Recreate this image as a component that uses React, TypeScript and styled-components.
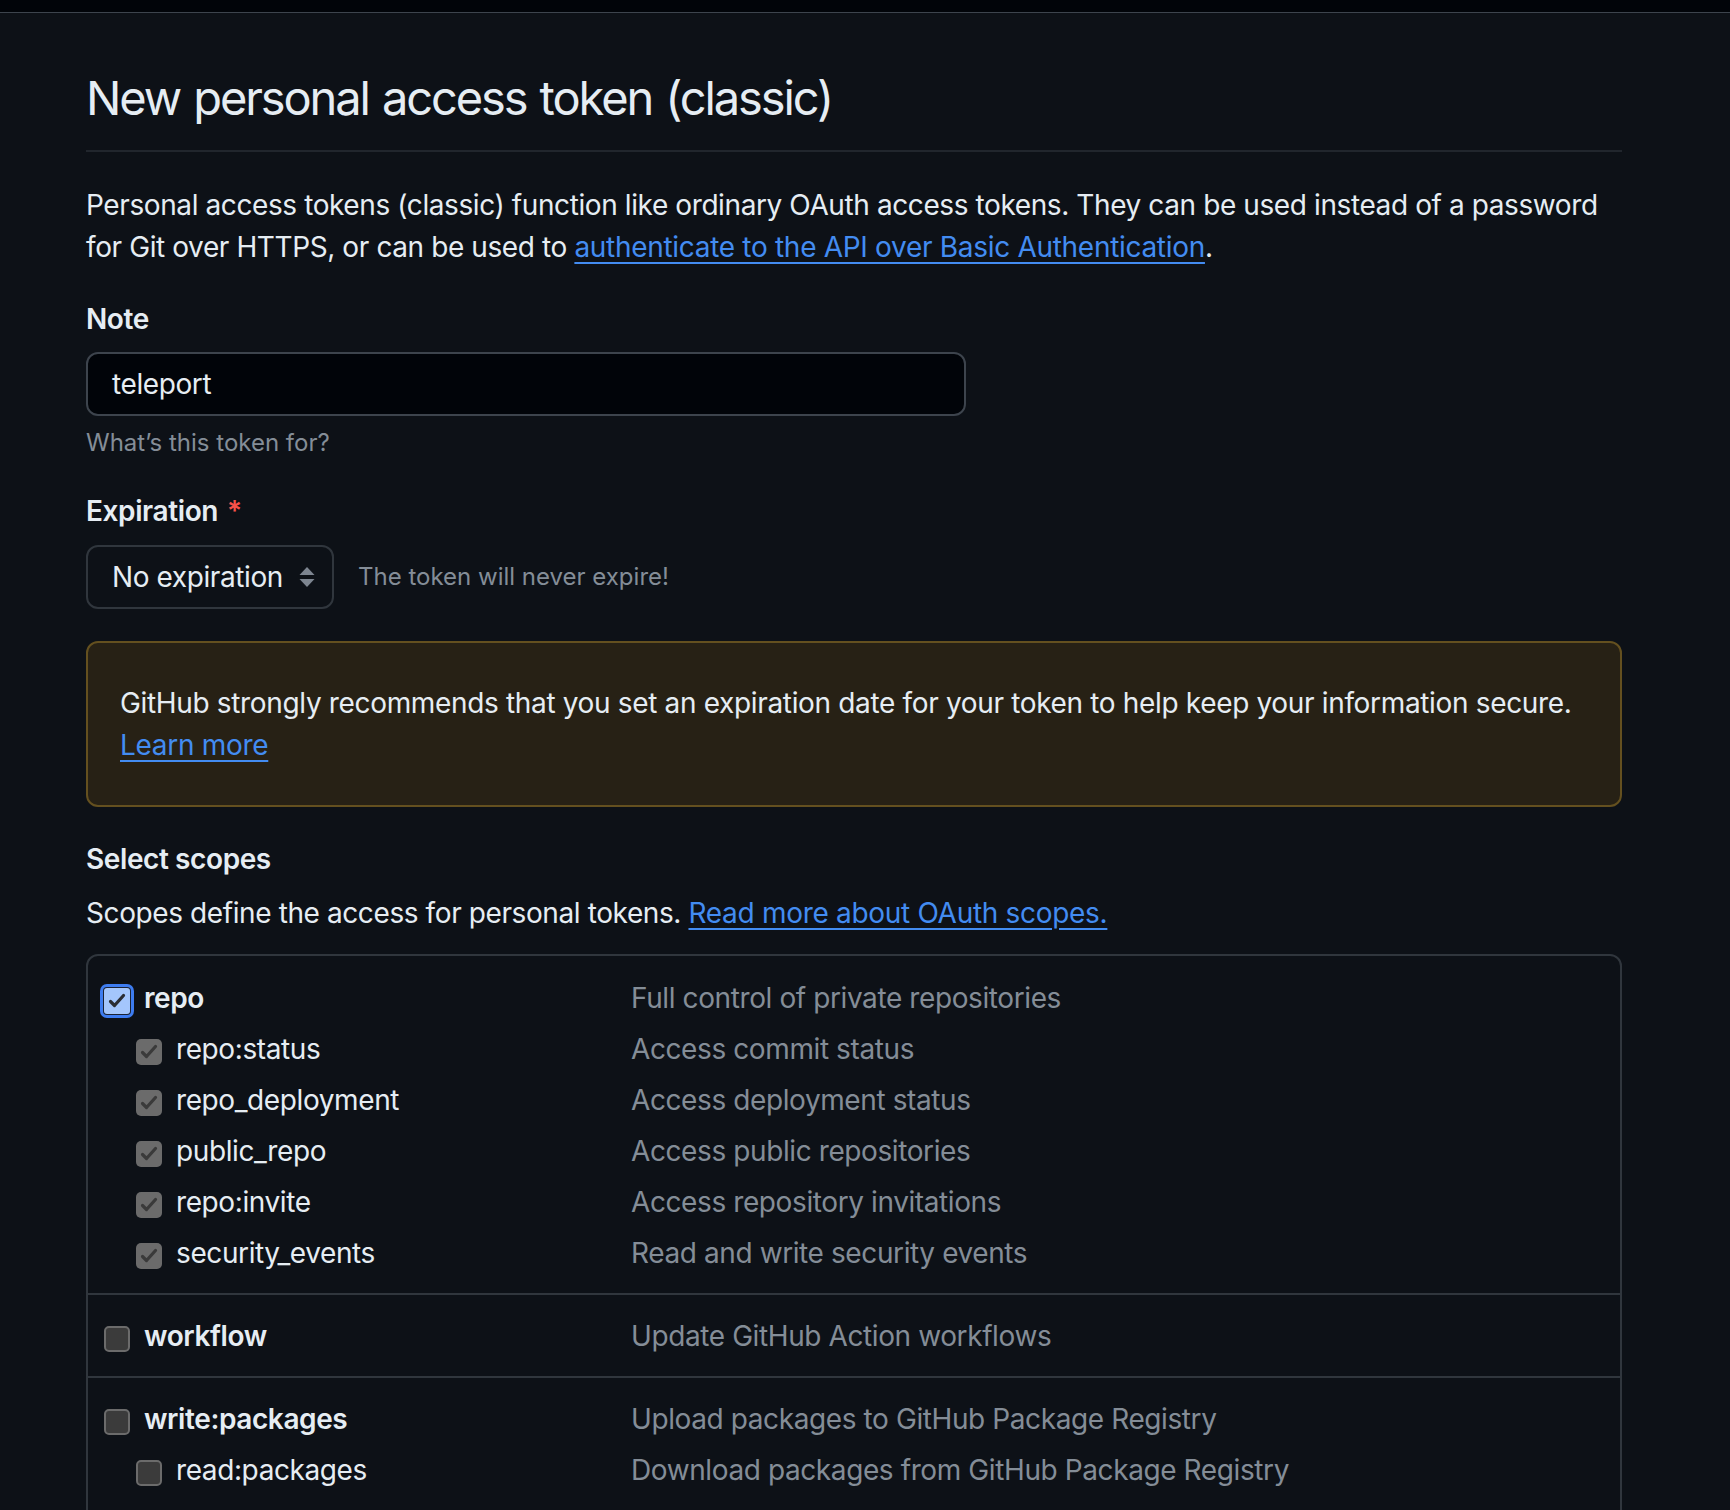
import styled, { createGlobalStyle } from 'styled-components';

const GlobalStyle = createGlobalStyle`
  body {
    margin: 0;
    background: #0d1117;
    color: #e6edf3;
    font-family: Inter, "Noto Sans", "Liberation Sans", sans-serif;
    font-size: 28px;
    letter-spacing: -0.4px;
  }
`;

const TopBar = styled.div`
  height: 12px;
  background: #010409;
  border-bottom: 1px solid #3d444d;
`;

const Page = styled.main`
  width: 1536px;
  padding: 0 0 40px 86px;
`;

const Subhead = styled.div`
  padding: 49px 0 16px;
  border-bottom: 2px solid #21262d;
`;

const Heading = styled.h2`
  margin: 0;
  font-size: 47px;
  font-weight: 400;
  line-height: 72px;
  letter-spacing: -2.1px;
  word-spacing: 2px;
`;

const Text = styled.p<{ $top?: number }>`
  margin: ${(p) => p.$top ?? 0}px 0 0;
  font-size: 28px;
  line-height: 42px;
`;

const Link = styled.a`
  color: #438cf1;
  text-decoration: underline;
  text-underline-offset: 5px;
  text-decoration-thickness: 2px;
  letter-spacing: -0.3px;
`;

const Label = styled.div<{ $top: number }>`
  margin-top: ${(p) => p.$top}px;
  font-size: 28px;
  line-height: 42px;
  font-weight: 600;
`;

const Required = styled.span`
  color: #f85149;
  margin-left: 9px;
`;

const Input = styled.div`
  margin-top: 12px;
  box-sizing: border-box;
  width: 880px;
  height: 64px;
  padding: 0 24px;
  display: flex;
  align-items: center;
  background: #010409;
  border: 2px solid #3d444d;
  border-radius: 12px;
  font-size: 28px;
`;

const Hint = styled.div<{ $top?: number }>`
  margin-top: ${(p) => p.$top ?? 0}px;
  font-size: 24px;
  line-height: 36px;
  color: #848d97;
  letter-spacing: 0;
`;

const SelectRow = styled.div`
  margin-top: 13px;
  display: flex;
  align-items: center;
  gap: 24px;
`;

const Select = styled.div`
  box-sizing: border-box;
  height: 64px;
  width: 248px;
  padding: 0 17px 0 24px;
  display: flex;
  align-items: center;
  justify-content: space-between;
  border: 2px solid #30363d;
  border-radius: 12px;
  font-size: 28px;
`;

const Flash = styled.div`
  margin-top: 32px;
  padding: 39px 32px;
  border: 2px solid #64501f;
  border-radius: 12px;
  background: #272115;
  letter-spacing: -0.34px;
`;

const ScopeBox = styled.div`
  margin-top: 20px;
  border: 2px solid #30363d;
  border-radius: 12px;
  overflow: hidden;
`;

const Group = styled.ul`
  list-style: none;
  margin: 0;
  padding: 16px 0 15px;
  & + & {
    border-top: 2px solid #30363d;
    padding-top: 15px;
  }
  &:last-child {
    padding-bottom: 40px;
  }
`;

const Row = styled.li`
  height: 51px;
  padding-left: 16px;
  display: grid;
  grid-template-columns: 527px 1fr;
  align-items: center;
  font-size: 28px;
`;

const Name = styled.div<{ $sub: boolean }>`
  display: flex;
  align-items: center;
  gap: 14px;
  padding-left: ${(p) => (p.$sub ? 32 : 0)}px;
  font-weight: ${(p) => (p.$sub ? 400 : 600)};
`;

const Desc = styled.div`
  color: #848d97;
`;

type BoxState = 'focused' | 'disabled' | 'unchecked';

const Box = styled.span<{ $state: BoxState }>`
  box-sizing: border-box;
  width: 26px;
  height: 26px;
  flex: none;
  margin-top: 7px;
  display: flex;
  align-items: center;
  justify-content: center;
  border-radius: ${(p) => (p.$state === 'focused' ? 3 : 5)}px;
  background: ${(p) =>
    p.$state === 'focused' ? '#a4c6fc' : p.$state === 'disabled' ? '#6b6b6b' : '#3b3b3b'};
  border: ${(p) => (p.$state === 'unchecked' ? '2px solid #6b6b6b' : 'none')};
  box-shadow: ${(p) => (p.$state === 'focused' ? '0 0 0 1px #1a2233, 0 0 0 4px #3d7cf0' : 'none')};
`;

const Check = ({ color }: { color: string }) => (
  <svg width="18" height="16" viewBox="0 0 18 16" fill="none">
    <path d="M2.5 8.5 L6.5 12.5 L15.5 2.5" stroke={color} strokeWidth="3.2" strokeLinecap="round" strokeLinejoin="round" />
  </svg>
);

const Checkbox = ({ state }: { state: BoxState }) => (
  <Box $state={state}>
    {state === 'focused' && <Check color="#2a2d33" />}
    {state === 'disabled' && <Check color="#3a3a3a" />}
  </Box>
);

const SelectArrows = () => (
  <svg width="16" height="20" viewBox="0 0 16 20">
    <path d="M8 0 L15.5 8 L0.5 8 Z" fill="#7d8590" />
    <path d="M0.5 12 L15.5 12 L8 20 Z" fill="#7d8590" />
  </svg>
);

type Scope = { name: string; desc: string; state: BoxState; sub?: boolean };

const groups: Scope[][] = [
  [
    { name: 'repo', desc: 'Full control of private repositories', state: 'focused' },
    { name: 'repo:status', desc: 'Access commit status', state: 'disabled', sub: true },
    { name: 'repo_deployment', desc: 'Access deployment status', state: 'disabled', sub: true },
    { name: 'public_repo', desc: 'Access public repositories', state: 'disabled', sub: true },
    { name: 'repo:invite', desc: 'Access repository invitations', state: 'disabled', sub: true },
    { name: 'security_events', desc: 'Read and write security events', state: 'disabled', sub: true },
  ],
  [{ name: 'workflow', desc: 'Update GitHub Action workflows', state: 'unchecked' }],
  [
    { name: 'write:packages', desc: 'Upload packages to GitHub Package Registry', state: 'unchecked' },
    { name: 'read:packages', desc: 'Download packages from GitHub Package Registry', state: 'unchecked', sub: true },
  ],
];

const App = () => (
  <>
    <GlobalStyle />
    <TopBar />
    <Page>
      <Subhead>
        <Heading>New personal access token (classic)</Heading>
      </Subhead>
      <Text $top={32}>
        Personal access tokens (classic) function like ordinary OAuth access tokens. They can be used instead of a password
        for Git over HTTPS, or can be used to <Link>authenticate to the API over Basic Authentication</Link>.
      </Text>

      <Label $top={30}>Note</Label>
      <Input>teleport</Input>
      <Hint $top={9}>What’s this token for?</Hint>

      <Label $top={29}>
        Expiration<Required>*</Required>
      </Label>
      <SelectRow>
        <Select>
          No expiration
          <SelectArrows />
        </Select>
        <Hint>The token will never expire!</Hint>
      </SelectRow>

      <Flash>
        <Text>
          GitHub strongly recommends that you set an expiration date for your token to help keep your information secure.
          <br />
          <Link>Learn more</Link>
        </Text>
      </Flash>

      <Label $top={31}>Select scopes</Label>
      <Text $top={12}>
        Scopes define the access for personal tokens. <Link>Read more about OAuth scopes.</Link>
      </Text>

      <ScopeBox>
        {groups.map((group, i) => (
          <Group key={i}>
            {group.map((s) => (
              <Row key={s.name}>
                <Name $sub={!!s.sub}>
                  <Checkbox state={s.state} />
                  {s.name}
                </Name>
                <Desc>{s.desc}</Desc>
              </Row>
            ))}
          </Group>
        ))}
      </ScopeBox>
    </Page>
  </>
);

export default App;
